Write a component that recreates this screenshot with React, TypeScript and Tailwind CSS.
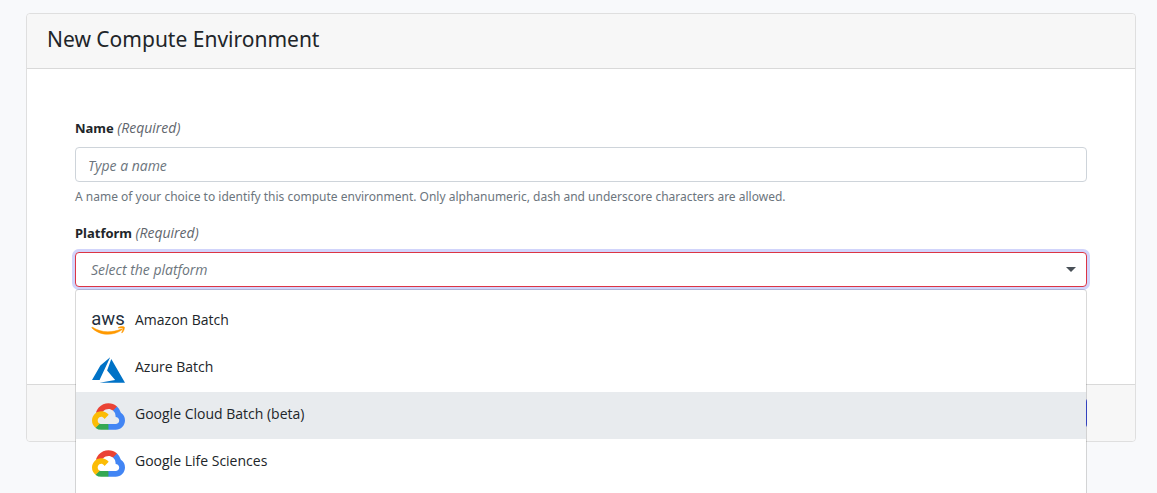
import { useState, type ReactNode } from 'react';

function AwsLogo() {
  return (
    <svg viewBox="0 0 33 24" className="h-6 w-[33px] overflow-visible" aria-hidden="true">
      <text x="16" y="13.500" textAnchor="middle" fontFamily="Roboto, sans-serif" fontWeight="400" fontSize="18.500" fill="#252f3e">
        aws
      </text>
      <g transform="translate(-0.500 -1)" fill="#ff9900" stroke="#ff9900" strokeWidth="0.500">
        <path d="M1.200 17.300c4.300 2.900 9.600 4.500 15.200 4.500 4.300 0 9-.9 13.200-2.700.7-.3 1.200.4.6.9-3.800 2.800-9.300 4.300-14 4.300-6.200 0-11.700-2.500-15.800-6.400-.4-.4 0-.9.800-.6z" />
        <path d="M31.200 18.300c-.5-.7-3.200-.3-4.400-.2-.4 0-.4-.3-.1-.5 2.200-1.500 5.700-1.100 6.100-.6.400.5-.1 4.100-2.100 5.800-.3.300-.6.100-.5-.2.500-1.100 1.500-3.600 1-4.300z" />
      </g>
    </svg>
  );
}

function AzureLogo() {
  return (
    <svg viewBox="0 2.700 24 18.600" className="h-[26px] w-[33px]" aria-hidden="true">
      <path
        fill="#0072c6"
        d="M5.483 21.300H24L14.025 4.013l-3.038 8.347 5.836 6.938L5.483 21.300zM13.230 2.700L6.105 8.677 0 19.253h5.505v.014L13.230 2.700z"
      />
    </svg>
  );
}

function GoogleCloudLogo() {
  return (
    <svg viewBox="0 0 256 206" className="h-[27px] w-[33px]" aria-hidden="true">
      <path
        fill="#ea4335"
        d="M170.252 56.819l22.253-22.253 1.483-9.370C153.437-11.677 88.976-7.496 52.420 33.920 42.267 45.423 34.734 59.764 30.717 74.573l7.970-1.123 44.505-7.340 3.436-3.513c19.797-21.742 53.270-24.667 76.128-6.168l7.496.390z"
      />
      <path
        fill="#4285f4"
        d="M224.205 73.918a100.249 100.249 0 0 0-30.217-48.722l-31.232 31.232a55.515 55.515 0 0 1 20.379 44.037v5.544c15.350 0 27.797 12.445 27.797 27.796 0 15.352-12.446 27.485-27.797 27.485h-55.671l-5.466 5.934v33.340l5.466 5.231h55.670c39.930.311 72.553-31.494 72.864-71.424a72.303 72.303 0 0 0-31.793-60.453"
      />
      <path
        fill="#34a853"
        d="M71.870 205.796h55.593V161.290H71.870a27.275 27.275 0 0 1-11.400-2.498l-7.887 2.420-22.409 22.253-1.952 7.886a72.310 72.310 0 0 0 43.648 14.445"
      />
      <path
        fill="#fbbc05"
        d="M71.870 61.425C31.940 61.664-.237 94.228.002 134.158a72.301 72.301 0 0 0 28.222 56.880l32.246-32.246c-13.990-6.322-20.208-22.786-13.887-36.776 6.320-13.990 22.786-20.208 36.775-13.888a27.796 27.796 0 0 1 13.888 13.888l32.246-32.246A72.224 72.224 0 0 0 71.870 61.425"
      />
    </svg>
  );
}

const platforms: { name: string; logo: ReactNode }[] = [
  { name: 'Amazon Batch', logo: <AwsLogo /> },
  { name: 'Azure Batch', logo: <AzureLogo /> },
  { name: 'Google Cloud Batch (beta)', logo: <GoogleCloudLogo /> },
  { name: 'Google Life Sciences', logo: <GoogleCloudLogo /> },
];

function FieldLabel({ id, htmlFor, children }: { id?: string; htmlFor: string; children: ReactNode }) {
  return (
    <label id={id} htmlFor={htmlFor} className="block text-[13px] leading-5">
      <span className="font-bold">{children}</span>{' '}
      <em className="font-['Open_Sans',sans-serif] text-sm leading-none text-[#5f666d]">(Required)</em>
    </label>
  );
}

export default function App() {
  const [active, setActive] = useState(2);

  return (
    <main className="min-h-screen overflow-hidden bg-[#f8f9fb] pt-[13px] pr-[21px] pb-[51px] pl-[26px] font-['Noto_Sans','Open_Sans',sans-serif] text-[13px] text-[#212529]">
      <form className="rounded border border-[#dfdfdf] bg-white" onSubmit={(e) => e.preventDefault()}>
        <header className="rounded-t border-b border-[#d9d9d9] bg-[#f7f7f7] px-5 pt-[11px] pb-[15px]">
          <h1 className="text-[21px] leading-7">New Compute Environment</h1>
        </header>

        <div className="px-12 pt-[49px] pb-[97px]">
          <FieldLabel htmlFor="name">Name</FieldLabel>
          <input
            id="name"
            type="text"
            placeholder="Type a name"
            className="mt-[9px] block h-[35px] w-full rounded border border-[#ced4da] bg-white px-3 pt-[2px] font-['Open_Sans',sans-serif] text-sm placeholder:text-[#6c757d] placeholder:italic"
          />
          <p className="mt-[5px] text-xs leading-5 text-[#6c757d]">
            A name of your choice to identify this compute environment. Only alphanumeric, dash and underscore
            characters are allowed.
          </p>

          <div className="relative mt-4">
            <FieldLabel id="platform-label" htmlFor="platform">
              Platform
            </FieldLabel>
            <button
              id="platform"
              type="button"
              role="combobox"
              aria-expanded="true"
              aria-controls="platform-list"
              className="mt-[9px] flex h-[35px] w-full items-center justify-between rounded border border-[#dc3545] bg-white pr-[10px] pl-[15px] font-['Open_Sans',sans-serif] text-sm text-[#6c757d] italic ring-[3px] ring-[#d1d4fb]"
            >
              Select the platform
              <svg viewBox="0 0 10 5" className="h-[5px] w-[10px]" aria-hidden="true">
                <path d="M0 0h10L5 5z" fill="#495057" />
              </svg>
            </button>
            <ul
              id="platform-list"
              role="listbox"
              aria-labelledby="platform-label"
              className="absolute inset-x-0 top-full z-10 mt-[2px] rounded border border-black/15 bg-white bg-clip-padding pt-2 pb-4 text-[#212529]"
            >
              {platforms.map((p, i) => (
                <li
                  key={p.name}
                  role="option"
                  aria-selected={i === active}
                  onMouseEnter={() => setActive(i)}
                  className={`flex h-[47px] items-center gap-[10px] px-4 ${i === active ? 'bg-[#e8ebee]' : ''}`}
                >
                  <span className="flex pt-[2px]">{p.logo}</span>
                  <span className="pb-1 font-['Open_Sans',sans-serif] text-sm">{p.name}</span>
                </li>
              ))}
            </ul>
          </div>
        </div>

        <footer className="flex justify-end rounded-b border-t border-[#d9d9d9] bg-[#f7f7f7] px-12 py-[13px]">
          <button type="submit" aria-label="Add" className="h-[30px] w-16 rounded bg-[#3d4ee0]" />
        </footer>
      </form>
    </main>
  );
}
